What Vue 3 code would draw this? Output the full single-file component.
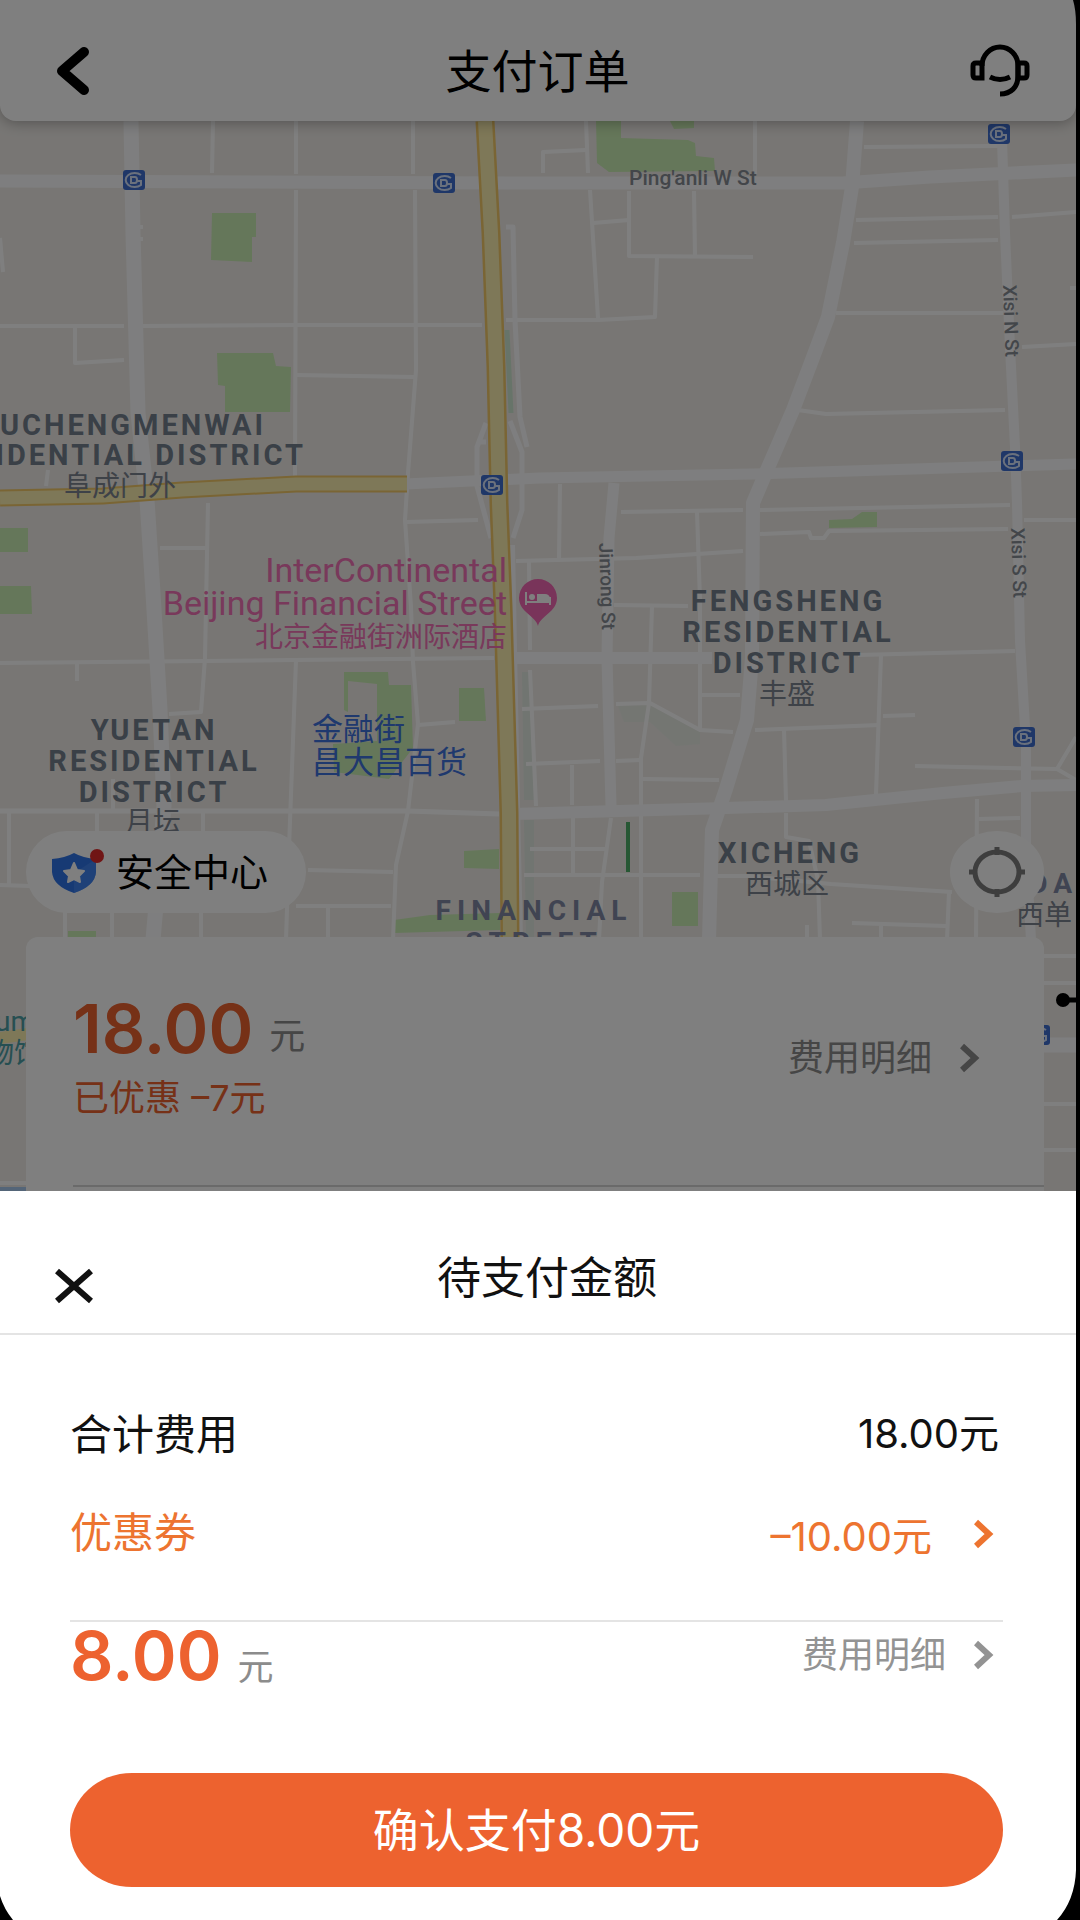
<script setup>
import { ref } from 'vue'

const total = ref('18.00')
const coupon = ref('10.00')
const payable = ref('8.00')

// subway stations on the map
const stations = [
  { x: 134, y: 180 },
  { x: 444, y: 183 },
  { x: 999, y: 134 },
  { x: 1012, y: 461 },
  { x: 492, y: 485 },
  { x: 1024, y: 737 },
  { x: 1039, y: 1035 },
]

const parks = [
  'M212 213H256V237H252V262L211 260Z',
  'M217 353H273L276 366L291 367L290 412H225V386L218 385Z',
  'M596 121H621V138L688 140L695 143L696 156L714 158L715 171L609 172L597 163Z',
  'M670 121H694V128L674 129Z',
  'M0 528H28V552H0Z',
  'M0 586H31L32 614H0Z',
  'M344 672H388L389 685H411L413 748L389 779L334 772L333 744L377 741V684L348 681V712L344 710Z',
  'M459 688H484L486 721H459Z',
  'M464 851L499 849V869L464 868Z',
  'M394 920L430 915L500 913V930L394 933Z',
  'M68 931H96V940H68Z',
  'M829 520L852 519L862 512H877V527L829 528Z',
  'M672 892H698V926H672Z',
]

const lanes = [
  'M213 121L212 173', 'M296 121V174', 'M296 190L295 477', 'M413 121V174',
  'M415 190L416 370L408 473L405 520L411 607L413 662L418 724L408 811L396 865L393 940',
  'M0 326H124', 'M143 326L296 325L482 325', 'M506 320H598L655 317L657 257',
  'M75 328V363L124 360', 'M296 375L414 377', 'M0 238L3 272', 'M138 227H143M138 239H143',
  'M586 121L588 173', 'M590 190L598 318', 'M543 173V152L586 150', 'M755 121V174',
  'M864 147L998 146', 'M856 220L998 217', 'M1012 217L1076 212', 'M854 243L998 240',
  'M836 313H1003', 'M798 410L826 414L1005 410', 'M629 191V256L753 257',
  'M694 191L695 256', 'M593 223L629 220', 'M1022 347L1076 344', 'M1070 288H1076',
  'M560 484L559 560', 'M516 561L636 558L743 551', 'M621 512L743 510', 'M760 510L1010 505',
  'M697 512L700 600V730', 'M760 534L809 532L811 538H824L829 531L1008 529', 'M1024 520H1076',
  'M614 605L688 606', 'M652 606L649 703L641 758V940', 'M522 709L598 706M616 704L650 703L700 730L733 732',
  'M700 695H740', 'M755 730L879 725', 'M881 655L876 794', 'M883 716L915 715',
  'M784 729L786 801', 'M526 764L600 761M616 761L640 760', 'M572 765V805', 'M643 779L719 780',
  'M915 766L1057 769L1076 737M1057 769L1076 780', 'M573 818V875', 'M530 849H605',
  'M611 818L602 882L599 940', 'M524 875H700', 'M717 876H747L831 884L952 892',
  'M786 813V837L809 841L818 880L820 940', 'M949 892L947 940', 'M977 799L976 940',
  'M979 819L1020 818', 'M852 923L946 926M881 926V940M807 925V940',
  'M48 470L46 486', 'M160 548H207', 'M208 503L205 658L201 712L169 714', 'M77 663V681',
  'M296 660L289 848L286 940', 'M406 522L478 520', 'M418 725L455 722', 'M9 811V885',
  'M0 885L30 886', 'M97 813V834M203 813V834M113 779V811', 'M112 910V940M65 910V940M201 910V940',
  'M308 870L393 872', 'M296 906L391 906M328 906V940', 'M0 663L293 660L494 658',
  'M529 562L530 650M530 670L536 806', 'M858 655L1015 651', 'M0 1183H28',
  'M1044 956H1076M1044 983H1076M1044 1104H1076M1044 1150H1076',
]
</script>

<template>
  <div class="page">
    <main class="scene" inert>
      <header class="topbar">
        <button class="icon-btn" aria-label="返回">
          <svg width="36" height="50" viewBox="0 0 36 50">
            <path d="M29 6L7 25L29 44" fill="none" stroke="#000" stroke-width="10" stroke-linecap="round" stroke-linejoin="round" />
          </svg>
        </button>
        <h1 class="topbar-title">支付订单</h1>
        <button class="icon-btn" aria-label="客服">
          <svg width="60" height="54" viewBox="0 0 60 54" fill="none" stroke="#000" stroke-width="5">
            <path d="M12 22A18 19 0 0 1 48 22V32C48 43 41 50 30 50" />
            <path d="M12 19H6Q3 19 3 22V31Q3 34 6 34H12Z" />
            <path d="M48 19H54Q57 19 57 22V31Q57 34 54 34H48Z" />
            <path d="M20 33Q30 38 40 33" />
          </svg>
        </button>
      </header>

      <section class="stage">
        <svg class="map" viewBox="0 121 1076 1070" preserveAspectRatio="xMinYMin slice" role="img" aria-label="地图">
          <rect y="121" width="1076" height="1070" fill="#f0ede9" />
          <g fill="#e2ebe2">
            <path d="M522 672H532L536 800H524Z" />
            <path d="M524 820H534V937H526Z" />
            <path d="M618 706L650 704L700 732V744L676 746L650 722H624Z" opacity=".5" />
          </g>
          <path d="M507 330L511 413" stroke="#cfe9d2" stroke-width="5" />
          <path v-for="d in parks" :key="d" :d="d" fill="#cbeeb4" />
          <g fill="none" stroke="#fff" stroke-linejoin="round">
            <path v-for="d in lanes" :key="d" :d="d" stroke-width="4" />
            <path d="M0 811L408 811L499 814" stroke-width="5" />
            <g stroke="#fdfdfe">
              <path d="M131 121L133 233L138 413L147 500L153 593L160 710L164 806L155 917L153 940" stroke-width="15" />
              <path d="M0 181L540 183H843L930 177L1076 170" stroke-width="13" />
              <path d="M405 484L540 478L753 474L850 471L1076 464" stroke-width="11" />
              <path d="M614 483L609 538L607 658L611 806" stroke-width="11" />
              <path d="M857 121L852 187L843 243L828 317L812 360L793 410L767 470L753 503L752 658L747 720L726 789L712 830L709 940" stroke-width="14" />
              <path d="M1002 140L1005 233L1010 347L1015 447L1017 503L1020 641L1026 744V848L1031 940" stroke-width="10" />
              <path d="M514 658H712" stroke-width="12" />
              <path d="M513 814L726 808L826 805L943 793L1022 786L1076 785" stroke-width="12" />
              <path d="M1044 1045H1076" stroke-width="15" />
              <path d="M506 227H513L515 320L520 417L527 447M486 423L477 447V486L491 538M510 421L522 452V510L513 538M477 442H486" stroke-width="5" />
              <path d="M512 545L517 806L520 940" stroke-width="6" />
            </g>
          </g>
          <g fill="none">
            <path d="M0 498L103 496L182 490L296 484L407 484" stroke="#f4ca68" stroke-width="17" />
            <path d="M0 498L103 496L182 490L296 484L407 484" stroke="#fdf0b0" stroke-width="13" />
            <path d="M485 121L491 233L496 367L499 503L503 607L506 710L509 813L510 940" stroke="#f4ca68" stroke-width="19" />
            <path d="M485 121L491 233L496 367L499 503L503 607L506 710L509 813L510 940" stroke="#fdf0b0" stroke-width="14" />
            <path d="M0 1038L28 1034" stroke="#fdf0b0" stroke-width="12" />
            <path d="M628 822V872" stroke="#4fae68" stroke-width="4" />
            <path d="M1063 1000H1078" stroke="#000" stroke-width="5" />
          </g>
          <circle cx="1063" cy="1000" r="7" />
          <path d="M0 1187H28V1191H0Z" fill="#a9cbf0" />

          <g v-for="s in stations" :key="`${s.x}-${s.y}`" :transform="`translate(${s.x} ${s.y})`">
            <rect x="-11" y="-10" width="22" height="20" rx="3" fill="#3f6fd0" />
            <g fill="none" stroke="#d5e2fb" stroke-width="2">
              <path d="M7 -5A9 7 0 1 0 7 5V1H3" />
              <path d="M-3 -3H1Q3 -3 3 0Q3 3 1 3H-3Z" />
            </g>
          </g>

          <g transform="translate(538 598)">
            <path d="M0 28C-2 18-19 14-19 0A19 19 0 0 1 19 0C19 14 2 18 0 28Z" fill="#f268b4" />
            <path d="M-12 -6V7M-12 4H12V7M12 4V-1" fill="none" stroke="#fff" stroke-width="2" />
            <path d="M-1 -4H7Q11 -4 12 0V4H-1Z" fill="#fff" />
            <circle cx="-6" cy="-1" r="3" fill="#fff" />
          </g>

          <g class="district">
            <text x="266" y="435" text-anchor="end">FUCHENGMENWAI</text>
            <text x="306" y="465" text-anchor="end">RESIDENTIAL DISTRICT</text>
            <text x="154" y="740" text-anchor="middle">YUETAN</text>
            <text x="154" y="771" text-anchor="middle">RESIDENTIAL</text>
            <text x="154" y="802" text-anchor="middle">DISTRICT</text>
            <text x="788" y="611" text-anchor="middle">FENGSHENG</text>
            <text x="788" y="642" text-anchor="middle">RESIDENTIAL</text>
            <text x="788" y="673" text-anchor="middle">DISTRICT</text>
            <text x="790" y="863" text-anchor="middle">XICHENG</text>
          </g>
          <g class="area">
            <text x="534" y="920" text-anchor="middle">FINANCIAL</text>
            <text x="534" y="952" text-anchor="middle">STREET</text>
            <text x="1078" y="893" text-anchor="end">XIDA</text>
          </g>
          <g class="local">
            <text x="120" y="496" text-anchor="middle">阜成门外</text>
            <text x="153" y="832" text-anchor="middle">月坛</text>
            <text x="787" y="704" text-anchor="middle">丰盛</text>
            <text x="787" y="894" text-anchor="middle">西城区</text>
            <text x="1044" y="925" text-anchor="middle">西单</text>
          </g>
          <g class="hotel">
            <text x="507" y="582" text-anchor="end">InterContinental</text>
            <text x="507" y="615" text-anchor="end">Beijing Financial Street</text>
            <text class="hotel-cn" x="507" y="647" text-anchor="end">北京金融街洲际酒店</text>
          </g>
          <g class="shop">
            <text x="312" y="740">金融街</text>
            <text x="312" y="773">昌大昌百货</text>
          </g>
          <g class="museum">
            <text x="-5" y="1031">um</text>
            <text x="-14" y="1063">物馆</text>
          </g>
          <g class="street">
            <text x="629" y="185">Ping'anli W St</text>
            <text class="street-v" transform="translate(1003 285) rotate(88)">Xisi N St</text>
            <text class="street-v" transform="translate(1011 528) rotate(88)">Xisi S St</text>
            <text class="street-v" transform="translate(599 543) rotate(88)">Jinrong St</text>
          </g>
        </svg>

        <div class="overlay-col">
          <div class="tools">
            <button class="safety">
              <svg width="54" height="48" viewBox="0 0 54 48">
                <path d="M22 5Q31 10 44 11V24Q43 38 22 45Q1 38 0 24V11Q13 10 22 5Z" fill="#2f74e8" />
                <path d="M22 25L44 11V24Q43 38 22 45Z" fill="#4a8cf5" opacity=".6" />
                <path d="M22 15L25 22L32 23L27 28L28 34L22 31L16 34L17 28L12 23L19 22Z" fill="#fff" stroke="#fff" stroke-width="2" stroke-linejoin="round" />
                <circle cx="45" cy="8" r="7" fill="#e02b2b" />
              </svg>
              <span class="safety-text">安全中心</span>
            </button>
            <button class="locate" aria-label="定位">
              <svg width="58" height="52" viewBox="0 0 58 52" fill="none" stroke="#7c7c7c" stroke-width="5">
                <ellipse cx="29" cy="26" rx="22" ry="20" />
                <path d="M29 1V9M29 43V51M1 26H9M49 26H57" />
              </svg>
            </button>
          </div>

          <article class="trip">
            <div class="trip-row">
              <div class="trip-cost">
                <p class="price">{{ total }}<span class="unit">元</span></p>
                <p class="saved">已优惠 –7元</p>
              </div>
              <button class="detail">
                <span class="detail-text">费用明细</span>
                <svg class="chevron" width="20" height="30" viewBox="0 0 20 30"><path d="M2 3L15 15L2 27" /></svg>
              </button>
            </div>
          </article>
        </div>
      </section>

      <div class="mask"></div>
      <svg class="corner corner-top" width="4" height="24" viewBox="0 0 4 24"><path d="M1 0Q4 10 4 24V0Z" /></svg>
    </main>

    <section class="sheet" role="dialog" aria-labelledby="sheet-title">
      <header class="sheet-head">
        <button class="icon-btn" aria-label="关闭">
          <svg width="38" height="36" viewBox="0 0 38 36">
            <path d="M2 3L36 33M36 3L2 33" fill="none" stroke="#111" stroke-width="6" />
          </svg>
        </button>
        <h2 id="sheet-title" class="sheet-title">待支付金额</h2>
      </header>

      <div class="sheet-body">
        <div class="line">
          <span class="line-label">合计费用</span>
          <span class="amount line-label">{{ total }}元</span>
        </div>
        <div class="line line--coupon">
          <span class="line-label">优惠券</span>
          <button class="coupon amount">
            –{{ coupon }}元
            <svg class="chevron" width="20" height="30" viewBox="0 0 20 30"><path d="M2 3L15 15L2 27" /></svg>
          </button>
        </div>
        <div class="sum">
          <p class="price">{{ payable }}<span class="unit">元</span></p>
          <button class="detail">
            <span class="detail-text">费用明细</span>
            <svg class="chevron" width="20" height="30" viewBox="0 0 20 30"><path d="M2 3L15 15L2 27" /></svg>
          </button>
        </div>
        <button class="pay">确认支付{{ payable }}元</button>
      </div>

      <svg class="corner corner-left" width="14" height="24" viewBox="0 0 14 24"><path d="M0 0Q4 13 13 24H0Z" /></svg>
      <svg class="corner corner-right" width="20" height="50" viewBox="0 0 20 50"><path d="M20 0Q19 30 1 50H20Z" /></svg>
    </section>
  </div>
</template>

<style>
body {
  margin: 0;
  background: #000;
}
</style>

<style scoped>
.page {
  display: flex;
  flex-direction: column;
  min-height: 100vh;
  box-sizing: border-box;
  padding-right: 4px;
  background: #000;
  color: #111;
  font-family: Inter, "Noto Sans CJK SC", sans-serif;
}

button {
  display: flex;
  align-items: center;
  padding: 0;
  border: 0;
  background: none;
  color: inherit;
  font: inherit;
  cursor: pointer;
}

svg { display: block; }

h1, h2, p {
  margin: 0;
  font-weight: 400;
}

.scene {
  position: relative;
  flex: 1;
  display: flex;
  flex-direction: column;
  overflow: hidden;
  background: #f0ede9;
}

.mask {
  position: absolute;
  inset: 0;
  z-index: 2;
  background: rgba(0, 0, 0, 0.5);
}

/* top bar */
.topbar {
  position: relative;
  z-index: 1;
  display: grid;
  grid-template-columns: 50px 1fr 60px;
  align-items: center;
  height: 121px;
  box-sizing: border-box;
  padding: 20px 46px 0 55px;
  border-radius: 0 0 16px 16px;
  background: #fff;
  box-shadow: 0 2px 14px rgba(0, 0, 0, 0.3);
}

.topbar-title {
  color: #000;
  font-size: 46px;
  line-height: 60px;
  text-align: center;
}

/* map */
.stage {
  position: relative;
  flex: 1;
  display: flex;
  min-height: 1070px;
}

.map {
  position: absolute;
  inset: 0;
  width: 100%;
  height: 100%;
  font-family: Roboto, "Noto Sans CJK SC", sans-serif;
}

.district,
.area {
  fill: #74808e;
  font-size: 29px;
  font-weight: 700;
  letter-spacing: 3px;
}

.area {
  fill: #8088a4;
  font-size: 28px;
  letter-spacing: 6px;
}

.local {
  fill: #7c8490;
  font-size: 28px;
}

.hotel {
  fill: #f272b6;
  font-size: 34px;
}

.hotel-cn { font-size: 28px; }

.shop {
  fill: #3f72dc;
  font-size: 31px;
}

.museum {
  fill: #4c9ea4;
  font-size: 28px;
}

.street {
  fill: #868c94;
  font-size: 21px;
  font-weight: 500;
}

.street-v { font-size: 19px; }

.overlay-col {
  position: relative;
  flex: 1;
  display: flex;
  flex-direction: column;
  justify-content: flex-end;
  gap: 24px;
  padding: 0 32px 0 26px;
}

.tools {
  display: flex;
  justify-content: space-between;
}

.safety {
  gap: 10px;
  height: 82px;
  padding: 0 38px 0 26px;
  border-radius: 41px;
  background: #fff;
  color: #000;
  font-size: 38px;
}

.safety-text,
.detail-text,
.line-label { padding-bottom: 6px; }

.locate {
  justify-content: center;
  width: 94px;
  height: 82px;
  border-radius: 50%;
  background: #fff;
}

.trip {
  padding: 56px 0 4px 47px;
  border-radius: 12px 12px 0 0;
  background: #fff;
}

.trip-row {
  display: flex;
  align-items: flex-start;
  justify-content: space-between;
  height: 192px;
  padding-right: 64px;
  border-bottom: 2px solid #d5d5d5;
}

.trip-row .detail { margin-top: 36px; }

.trip-row .unit { vertical-align: 4px; }

/* shared money text */
.price {
  color: #ed622f;
  font-size: 68px;
  font-weight: 600;
  line-height: 70px;
}

.unit {
  margin-left: 16px;
  color: #8c8c8c;
  font-size: 36px;
  font-weight: 400;
  line-height: 36px;
}

.saved {
  margin-top: 10px;
  color: #ed622f;
  font-size: 36px;
  line-height: 50px;
}

.detail {
  gap: 28px;
  color: #8c8c8c;
  font-size: 36px;
}

.chevron {
  fill: none;
  stroke: currentColor;
  stroke-width: 6;
}

/* payment sheet */
.sheet {
  position: relative;
  background: #fff;
}

.sheet-head {
  display: grid;
  grid-template-columns: 60px 1fr 52px;
  align-items: center;
  height: 142px;
  padding: 0 45px 0 55px;
  border-bottom: 2px solid #e4e4e4;
}

.sheet-head .icon-btn { padding-top: 48px; }

.sheet-title {
  padding-top: 32px;
  font-size: 44px;
  line-height: 60px;
  text-align: center;
}

.sheet-body { padding: 50px 73px 33px 70px; }

.line {
  display: flex;
  align-items: center;
  justify-content: space-between;
  height: 98px;
  padding-right: 4px;
  font-size: 42px;
}

.line--coupon {
  padding-right: 9px;
  color: #ed7430;
}

.amount { font-size: 40px; }

.coupon {
  gap: 42px;
  padding-top: 4px;
}

.sum {
  display: flex;
  align-items: center;
  justify-content: space-between;
  height: 66px;
  margin-top: 39px;
  padding-right: 9px;
  border-top: 2px solid #e4e4e4;
}

.sum .detail { color: #939393; }

.pay {
  justify-content: center;
  width: 100%;
  height: 114px;
  margin-top: 85px;
  padding-bottom: 6px;
  border-radius: 62px / 57px;
  background: #ed622f;
  color: #fff;
  font-size: 46px;
}

/* device corners */
.corner {
  position: absolute;
  z-index: 3;
}
.corner-top { top: 0; right: 0; }
.corner-left { bottom: 0; left: 0; }
.corner-right { right: 0; bottom: 0; }
</style>
